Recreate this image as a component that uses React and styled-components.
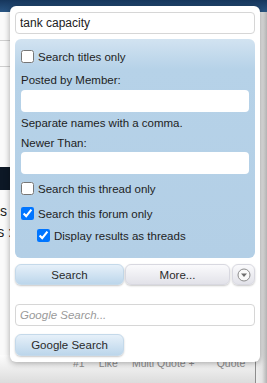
import React from 'react';
import styled, { createGlobalStyle } from 'styled-components';

const GlobalStyle = createGlobalStyle`
	html, body {
		margin: 0;
		padding: 0;
		background: #f6f6f6;
	}
	* {
		box-sizing: border-box;
	}
`;

const Page = styled.div`
	position: relative;
	width: 267px;
	height: 383px;
	display: flex;
	flex-direction: column;
	overflow: hidden;
	font-family: 'Liberation Sans', Arial, sans-serif;
`;

const Header = styled.div`
	height: 12px;
	flex: none;
	background: linear-gradient(#16365c, #2a5684);
`;

const Body = styled.div`
	flex: 1;
	display: flex;
`;

const Main = styled.div`
	flex: 1;
	display: flex;
	flex-direction: column;
	background: #fafafa;
`;

const Side = styled.div`
	width: 12px;
	border-left: 1px solid #8d8d8d;
	background: linear-gradient(to right, #eeeeee 0, #e4e4e4 6px, #a9a9a9 12px);
`;

const Rule = styled.div`
	height: 1px;
	background: #cfcfcf;
	margin-top: ${({ $top }) => $top}px;
`;

const DarkBar = styled.div`
	height: 23px;
	margin-top: 100px;
	background: #0d1826;
`;

const Stat = styled.div`
	width: ${({ $w }) => $w}px;
	display: flex;
	justify-content: flex-end;
	white-space: nowrap;
	overflow: hidden;
	font-size: 14px;
	line-height: 20px;
	color: #222;
	margin-top: ${({ $top }) => $top}px;
`;

const PostFooter = styled.div`
	margin-top: auto;
	height: 28px;
	display: flex;
	align-items: flex-start;
	gap: 14px;
	padding: 1px 0 0 73px;
	background: linear-gradient(#fdfdfd, #dcdcdc);
	font-size: 10.5px;
	line-height: 14px;
	white-space: nowrap;
	color: #8a8a8a;
`;

const FooterLink = styled.span`
	margin-left: ${({ $extra }) => $extra || 0}px;
`;

const Popup = styled.div`
	position: absolute;
	left: 10px;
	top: 6px;
	width: 250px;
	padding: 6px 5px;
	background: #fff;
	border-radius: 6px;
	box-shadow: 0 1px 6px rgba(0, 0, 0, 0.35);
	display: flex;
	flex-direction: column;
`;

const TextField = styled.input`
	display: block;
	width: 100%;
	height: 22px;
	padding: 0 4px;
	border: 1px solid ${({ $plain }) => ($plain ? 'transparent' : '#d6d6d6')};
	border-radius: 4px;
	background: #fff;
	font-family: 'Liberation Sans', Arial, sans-serif;
	font-size: 12px;
	color: #222;
	outline: none;
	margin-top: ${({ $top }) => $top || 0}px;
	&::placeholder {
		color: #9a9a9a;
		font-style: italic;
		font-size: 11.5px;
	}
`;

const Panel = styled.div`
	margin-top: 5px;
	padding: 9px 6px 14px;
	border-radius: 6px;
	background: linear-gradient(#d2e3f1 0, #b6d2e8 30px, #b3cfe6 100%);
	display: flex;
	flex-direction: column;
`;

const CheckRow = styled.label`
	display: flex;
	align-items: center;
	height: 17px;
	margin-top: ${({ $top }) => $top || 0}px;
	padding-left: ${({ $indent }) => ($indent ? 16 : 0)}px;
	font-size: 11.5px;
	color: #1e1e1e;
	input {
		width: 13px;
		height: 13px;
		margin: 0 4px 0 0;
	}
`;

const Label = styled.div`
	font-size: 11.5px;
	line-height: 16px;
	color: #1e1e1e;
	margin-top: ${({ $top }) => $top || 0}px;
`;

const ButtonRow = styled.div`
	display: flex;
	gap: 1px;
	margin-top: 6px;
	height: 21px;
`;

const Button = styled.button`
	height: ${({ $h }) => $h || 21}px;
	width: ${({ $w }) => $w}px;
	flex: none;
	padding: 0;
	border: 1px solid ${({ $blue }) => ($blue ? '#c4d9ea' : '#d8d8e0')};
	border-radius: 6px;
	background: ${({ $blue }) =>
		$blue ? 'linear-gradient(#e6f0f9, #bcd6eb)' : 'linear-gradient(#fafafc, #e2e2e9)'};
	box-shadow: 0 1px 2px rgba(0, 0, 0, 0.22);
	font-family: 'Liberation Sans', Arial, sans-serif;
	font-size: 11.5px;
	color: #2a2a2a;
	display: flex;
	align-items: center;
	justify-content: center;
	margin-top: ${({ $top }) => $top || 0}px;
`;

const MenuButton = styled(Button)`
	width: 23px;
	margin-left: 1px;
`;

function DownIcon() {
	return (
		<svg width="14" height="14" viewBox="0 0 14 14">
			<circle cx="7" cy="7" r="6" fill="#fafafa" stroke="#8c8c8c" strokeWidth="1" />
			<path d="M4 5.5 L10 5.5 L7 9 Z" fill="#6d6d6d" />
		</svg>
	);
}

export default function App() {
	return (
		<Page>
			<GlobalStyle />
			<Header />
			<Body>
				<Main>
					<Rule $top={28} />
					<Rule $top={25} />
					<DarkBar />
					<Stat $top={11} $w={7}>Posts</Stat>
					<Stat $top={1} $w={12}>Thanks :</Stat>
					<PostFooter>
						<FooterLink>#1</FooterLink>
						<FooterLink>Like</FooterLink>
						<FooterLink>Multi Quote +</FooterLink>
						<FooterLink $extra={8}>Quote</FooterLink>
					</PostFooter>
				</Main>
				<Side />
			</Body>

			<Popup>
				<TextField defaultValue="tank capacity" />
				<Panel>
					<CheckRow>
						<input type="checkbox" />
						Search titles only
					</CheckRow>
					<Label $top={7}>Posted by Member:</Label>
					<TextField $plain $top={2} />
					<Label $top={3}>Separate names with a comma.</Label>
					<Label $top={4}>Newer Than:</Label>
					<TextField $plain $top={1} />
					<CheckRow $top={6}>
						<input type="checkbox" />
						Search this thread only
					</CheckRow>
					<CheckRow $top={8}>
						<input type="checkbox" defaultChecked />
						Search this forum only
					</CheckRow>
					<CheckRow $top={5} $indent>
						<input type="checkbox" defaultChecked />
						Display results as threads
					</CheckRow>
				</Panel>
				<ButtonRow>
					<Button $blue $w={109}>Search</Button>
					<Button $w={105}>More...</Button>
					<MenuButton>
						<DownIcon />
					</MenuButton>
				</ButtonRow>
				<TextField $top={19} placeholder="Google Search..." />
				<Button $blue $w={109} $h={22} $top={8}>Google Search</Button>
			</Popup>
		</Page>
	);
}
